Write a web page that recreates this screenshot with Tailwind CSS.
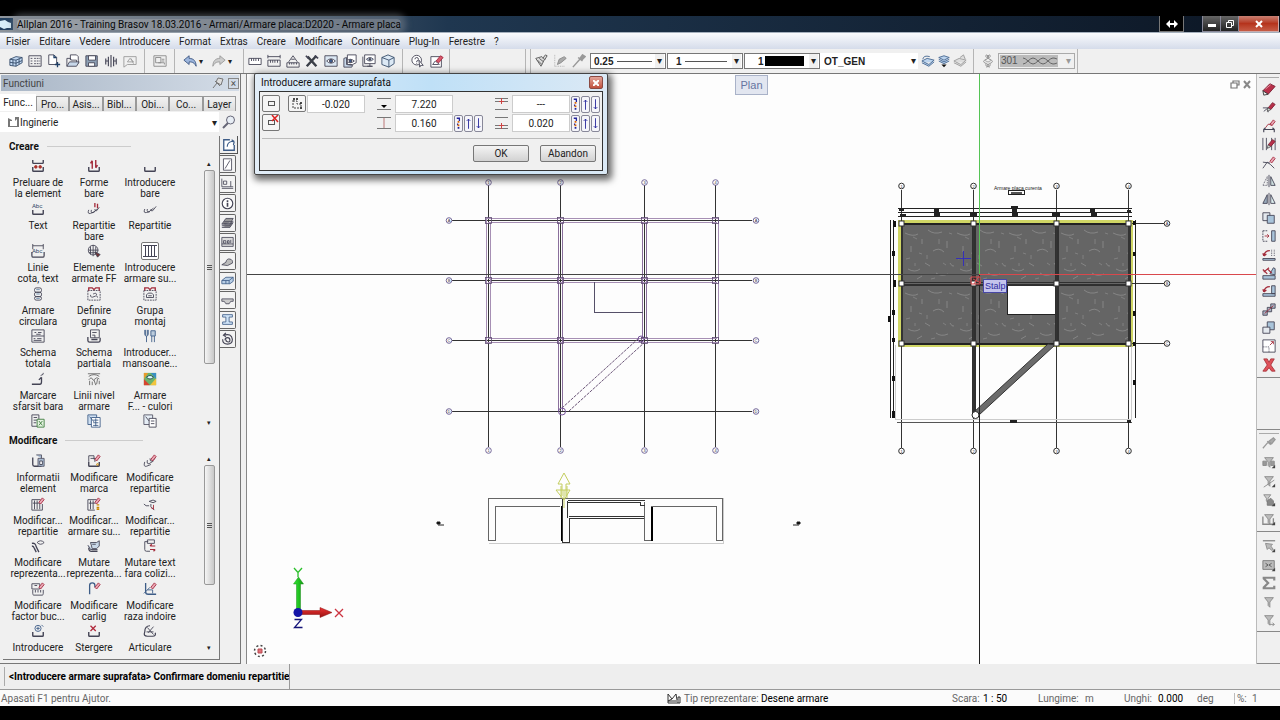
<!DOCTYPE html>
<html lang="ro">

<head>
    <meta charset="UTF-8">
    <meta name="viewport" content="width=device-width, initial-scale=1.0">
    <title>Allplan 2016 - Armare placa</title>
    <script src="https://cdn.jsdelivr.net/npm/@tailwindcss/browser@4"></script>
</head>

<body class="flex h-screen flex-col overflow-hidden bg-black pt-4 pb-[14px] font-[Roboto,'Noto_Sans',sans-serif] text-[10px] leading-[11px] text-[#222]">

    <!-- icon library, 16x16 -->
    <svg class="hidden" xmlns="http://www.w3.org/2000/svg">
        <defs>
            <g id="pen"><path d="M7 9l5-6 3 2-5 6z" fill="#b8304a" stroke="#7b2034" /><path d="M7 9l3 2-4 2z" fill="#eee" stroke="#555" /></g>
            <g id="penSmall"><path d="M9 6l4-5 2 2-4 5z" fill="#e9a8b4" stroke="#a5283f" /></g>
            <g id="tray"><path d="M2 9v4q0 1 1 1h10q1 0 1-1V9" stroke-width="1.6" /></g>
            <g id="funnel"><path d="M3 3h10L9 8v6l-2-2V8z" fill="#bbb" stroke="#888" /></g>
            <g id="corner"><path d="M15 11v4h-4z" fill="#444" stroke="none" /></g>
        </defs>
        <g>
            <symbol id="i-building" viewBox="0 0 16 16"><path d="M1 6l7-3 7 1v6l-7 4-7-1z" fill="#c3d9f2" stroke="#334a68" /><path d="M1 6l7 1 7-3M8 7v7M4.500 6.500v7M1 9.500l7 1 7-3M11.500 5.500v6" stroke="#334a68" /></symbol>
            <symbol id="i-layers" viewBox="0 0 16 16"><path d="M1 2h14v12H1z" /><path d="M3 5h2M7 5h7M3 8h2M7 8h7M3 11h2M7 11h7" stroke-dasharray="2 1" /></symbol>
            <symbol id="i-newdoc" viewBox="0 0 16 16"><path d="M2 1h6l3 3v8H2z" fill="#fff" /><path d="M8 1v3h3M12 9v6M9 12h6" stroke="#1f3f66" stroke-width="1.500" /></symbol>
            <symbol id="i-open" viewBox="0 0 16 16"><path d="M5 7V1h7l2 2v8" fill="#fff" /><path d="M1 14V5h4l1 2h6v2" /><path d="M1 14l3-5h11l-3 5z" fill="#c8d8ea" /></symbol>
            <symbol id="i-save" viewBox="0 0 16 16"><path d="M1 2h13v12H1z" fill="#8da0b5" /><path d="M4 2h8v5H4z" fill="#fff" /><path d="M4 10h7v4H4z" fill="#fff" /></symbol>
            <symbol id="i-split" viewBox="0 0 16 16"><path d="M2 5v7M5 3v11M8 1v14M11 3v11M14 5v7M2 8h3M11 8h3" stroke-width="1.300" /></symbol>
            <symbol id="i-stamp" viewBox="0 0 16 16"><path d="M1 3h14v9H5l-4 3z M5 9l3-4 4 4z" stroke="#999" /><path d="M9 5l3 6" stroke="#999" /></symbol>
            <symbol id="i-layout" viewBox="0 0 16 16"><path d="M1 2h14v12H1zM3 4h6v6H3zM6 10h7v2" stroke="#888" /><path d="M10 6h3M10 8h3" stroke="#888" /></symbol>
            <symbol id="i-undo" viewBox="0 0 16 16"><path d="M1 7l6-5v3c5 0 8 3 8 9-2-4-4-5-8-5v3z" fill="#9db6dd" stroke="#3a5580" /></symbol>
            <symbol id="i-redo" viewBox="0 0 16 16"><path d="M15 7L9 2v3c-5 0-8 3-8 9 2-4 4-5 8-5v3z" fill="#ccc" stroke="#999" /></symbol>
            <symbol id="i-ruler" viewBox="0 0 16 16"><path d="M1 5h14v7H1z" fill="#fff" /><path d="M4 5v3M6.500 5v3M9 5v3M12 5v3" /></symbol>
            <symbol id="i-ruler2" viewBox="0 0 16 16"><path d="M1 1v4M15 1v4M1 3h14M1 7h14v7H1z" /><path d="M4 7v3M6.500 7v3M9 7v3M12 7v3" /></symbol>
            <symbol id="i-angle" viewBox="0 0 16 16"><path d="M1 10h14v5H1zM3 9l5-7 5 7M6 6h4M4 10v2M6.500 10v2M9 10v2M12 10v2" /></symbol>
            <symbol id="i-tools" viewBox="0 0 16 16"><path d="M3 3l10 11M13 2L2 14" stroke-width="2.800" stroke="#3b3f48" /><path d="M1 2l3 3M11 2l4 3" stroke-width="2" /></symbol>
            <symbol id="i-eye" viewBox="0 0 16 16"><path d="M1 2h14v12H1z" fill="#dbe7f3" /><path d="M3 8q5-5 10 0-5 5-10 0z" fill="#fff" /><circle cx="8" cy="8" r="1.800" fill="#3b5f95" /></symbol>
            <symbol id="i-eyedoc" viewBox="0 0 16 16"><path d="M5 1h10v9l-4 2H5z" fill="#fff" /><path d="M1 5l3-1v8l7 1-1 2H1z" fill="#c8d8ea" /><path d="M4 8q4-4 9 0-5 4-9 0z" fill="#fff" /><circle cx="8.500" cy="8" r="1.500" fill="#3b5f95" /></symbol>
            <symbol id="i-eyescreen" viewBox="0 0 16 16"><path d="M3 1h12v10H3z" fill="#fff" /><path d="M1 3v11h11M6 14h6M9 11v3" /><path d="M5 6q4-4 8 0-4 4-8 0z" fill="#c8d8ea" /><circle cx="9" cy="6" r="1" fill="#333" /></symbol>
            <symbol id="i-cube" viewBox="0 0 16 16"><path d="M1 4l7-3 7 3v7l-6 4-8-3z" fill="#dce9f5" stroke="#334a68" /><path d="M1 4l8 3 6-3M9 7v8" stroke="#334a68" /></symbol>
            <symbol id="i-help" viewBox="0 0 16 16"><circle cx="6.500" cy="7" r="5.500" fill="#fff" /><path d="M4.500 6q0-2 2-2t2 2-2 2v1M6.500 10v1" /><path d="M9 7l5 6h-3l-1 2z" fill="#fff" /></symbol>
            <symbol id="i-editbox" viewBox="0 0 16 16"><path d="M1 3h12v12H1z" fill="#fff" /><path d="M3 12l3-4 5 4M3 12h7" /><path d="M7 8l5-6 3 2-5 6z" fill="#d8596c" stroke="#a5283f" /></symbol>
            <symbol id="i-brush" viewBox="0 0 16 16"><path d="M2 5l7-2 3 3-4 8zM4 7l5 5M6 5l5 4M10 5l3-4 2 1-3 5" fill="#ddd" stroke="#555" /></symbol>
            <symbol id="i-pickline" viewBox="0 0 16 16"><path d="M2 1v13M2 14h11" stroke="#aaa" stroke-dasharray="1 1" /><path d="M5 12l2-6 6-3 2 2-6 5z" fill="#aaa" stroke="#888" /></symbol>
            <symbol id="i-dropper" viewBox="0 0 16 16"><path d="M1 15l8-9M7 4l5 4M9 5l3-4 3 2-4 4z" fill="#999" stroke="#999" stroke-width="1.700" /></symbol>
            <symbol id="i-layerblue" viewBox="0 0 16 16"><path d="M1 8l6-3 8 2-6 5zM1 10l8 4 6-5" fill="#bcd4ee" stroke="#42648e" /><path d="M2 6q1-5 8-3" stroke="#42648e" /></symbol>
            <symbol id="i-layerdown" viewBox="0 0 16 16"><path d="M2 4l6-2 6 2-6 3zM2 6l6 3 6-3M2 8l6 3 6-3" fill="#bcd4ee" stroke="#42648e" /><path d="M5 12h6l-3 3z" fill="#111" stroke="none" /></symbol>
            <symbol id="i-layergray" viewBox="0 0 16 16"><path d="M1 8l6-3 8 2-6 5zM1 10l8 4 6-5M8 4l4-3 2 5" fill="#ddd" stroke="#999" /></symbol>
            <symbol id="i-chain" viewBox="0 0 16 16"><path d="M6 1q6 2.500 0 5t0 5 0 4M10 1q-6 2.500 0 5t0 5 0 4" stroke="#888" /><path d="M6 1q-2 3 2 3t2-3M6 6q-2 3 2 3t2-3M6 11q-2 3 2 3t2-3" stroke="#999" /></symbol>

            <symbol id="i-preluare" viewBox="0 0 16 16"><path d="M2 1v3q0 1 1 1h10q1 0 1-1V1" stroke-width="1.600" /><use href="#tray" /><circle cx="5.500" cy="9" r="1.500" fill="#a32" stroke="#a33" /><circle cx="10.500" cy="9" r="1.500" fill="#a32" stroke="#a33" /></symbol>
            <symbol id="i-forme" viewBox="0 0 16 16"><use href="#tray" /><path d="M6 11V2M6 2L4 5M10 1v9M10 10l2-3" stroke="#a32b3a" stroke-width="1.600" /></symbol>
            <symbol id="i-bare" viewBox="0 0 16 16"><use href="#tray" /></symbol>
            <symbol id="i-text" viewBox="0 0 16 16"><use href="#tray" /><text x="1" y="7" font-size="7" fill="#334a68" stroke="none" font-family="Roboto">Abc</text></symbol>
            <symbol id="i-repart1" viewBox="0 0 16 16"><path d="M2 9q-2 5 2 4l5-2M5 9q-1 4 2 3l5-4M9 8q0 3 2 2l3-4" /><path d="M9 1v5M12 2v5" stroke="#a32b3a" stroke-width="1.500" /></symbol>
            <symbol id="i-repart2" viewBox="0 0 16 16"><path d="M2 8q-2 5 2 4l4-1M5 8q-1 4 2 3l5-4M9 8q0 3 2 2l4-5" /></symbol>
            <symbol id="i-cota" viewBox="0 0 16 16"><path d="M2 0v6M14 0v6M2 2h12" /><text x="1" y="10" font-size="7" fill="#334a68" stroke="none" font-family="Roboto">Abc</text><path d="M1 9v4q0 2 1 2h12q1 0 1-2V9" stroke-width="1.400" /></symbol>
            <symbol id="i-armff" viewBox="0 0 16 16"><circle cx="7" cy="7" r="5.500" /><path d="M2 7h11M7 1v13M4 3v9M10 3v9M2 10h9" /><path d="M9 9l6 3-3 3z" fill="#733" /></symbol>
            <symbol id="i-suprafata" viewBox="0 0 16 16"><path d="M1 2.500h14M3.500 3v10M6.500 3v10M9.500 3v10M12.500 3v10M1 13.500h14" /></symbol>
            <symbol id="i-circ" viewBox="0 0 16 16"><rect x="4" y="1" width="8" height="5" rx="2" /><rect x="4" y="6" width="8" height="5" rx="2" /><rect x="4" y="11" width="8" height="4" rx="2" /><path d="M6 3h4M6 8h4M6 13h4" stroke="#68a" /></symbol>
            <symbol id="i-definire" viewBox="0 0 16 16"><path d="M1 4h14v11H1z" stroke-dasharray="2 1" /><path d="M2 4V1h4l2 2 2-2h4v3" stroke="#a32b3a" stroke-width="1.500" /><path d="M4 9q0 4 4 2t4 1M7 8q4-2 4 1" /></symbol>
            <symbol id="i-montaj" viewBox="0 0 16 16"><path d="M1 4h14v11H1z" stroke-dasharray="2 1" /><path d="M2 4V1h4l2 2 2-2h4v3" stroke="#a32b3a" stroke-width="1.500" /><path d="M4 12V9l2-2h4l2 2v3zM6 10h4" /></symbol>
            <symbol id="i-schemat" viewBox="0 0 16 16"><path d="M1 1h14v14H1zM1 8h14M4 4h2M8 4h4M3 11h2M7 11h5M3 13h9M6 6h5" /></symbol>
            <symbol id="i-schemap" viewBox="0 0 16 16"><path d="M4 1h10v9H4zM6 4h5M6 7h3v3" /><path d="M1 9v4q0 2 2 2h10q2 0 2-2v-3M5 12h7" stroke-width="1.500" /></symbol>
            <symbol id="i-mansoane" viewBox="0 0 16 16"><path d="M2 1v5q0 2 2 2t2-2V1M4 8v7M3 1v6M5 1v6" stroke="#3d5c87" /><path d="M9 2h5v6H9zM10 8v7M13 8v7" stroke="#3d5c87" fill="#bcd" /></symbol>
            <symbol id="i-sfarsit" viewBox="0 0 16 16"><path d="M1 14h9q2 0 2-3V6M12 6l-3 3" stroke-width="1.500" /><path d="M11 4q4-1 3-3" /></symbol>
            <symbol id="i-nivel" viewBox="0 0 16 16"><path d="M1 2h14M2 5q6-4 12 0M2 9q3-4 4-1t3 0 5 0M3 10v5M6 11v4M8 9l2 6M12 8l-1 6M14 10v4" stroke="#666" /></symbol>
            <symbol id="i-culori" viewBox="0 0 16 16"><g stroke="none"><path d="M1 1h14v14H1z" fill="#6cb36c" /><path d="M1 8l7 7H1z" fill="#d6452f" /><path d="M15 15H8l7-8z" fill="#f2c43c" /><path d="M9 1h6v7z" fill="#3a8fc4" /><path d="M1 1h5L1 8z" fill="#e99b2e" /></g><path d="M4 6q4-4 8 0-4 4-8 0z" fill="#dff" stroke="#245" /></symbol>
            <symbol id="i-excel" viewBox="0 0 16 16"><path d="M1 1h8v13H1zM3 4h4M3 7h4M3 10h3" /><path d="M7 6h8v9H7z" fill="#e5f3e2" stroke="#3c7a3c" /><path d="M9 8l4 5M13 8l-4 5" stroke="#3c7a3c" /></symbol>
            <symbol id="i-export" viewBox="0 0 16 16"><path d="M1 1h10v11H1z" fill="#cfe0f2" stroke="#3d5c87" /><path d="M5 4h10v11H5z" fill="#fff" stroke="#3d5c87" /><path d="M7 7h6M7 10h6M7 13h6M10 5v9M3 3l5 6" stroke="#3d5c87" /></symbol>
            <symbol id="i-export2" viewBox="0 0 16 16"><path d="M1 1h10v11H1z" fill="#e6eef6" stroke="#556" /><path d="M7 5h8v10H7z" fill="#fff" /><path d="M9 8h4M9 11h4M3 3l4 5" /></symbol>
            <symbol id="i-info" viewBox="0 0 16 16"><path d="M2 4v8q0 2 2 2h8" stroke-width="1.500" /><path d="M6 1h6v4M8 5h7v9H8z" fill="#a9bcd2" stroke="#556" /><path d="M10 8h3v4h-3z" fill="#fff" /></symbol>
            <symbol id="i-marca" viewBox="0 0 16 16"><use href="#tray" /><path d="M2 9V2h6v4M4 5h5v4" /><circle cx="12" cy="12" r="1" stroke="#c80" /><use href="#penSmall" /></symbol>
            <symbol id="i-modrep" viewBox="0 0 16 16"><path d="M2 9q-2 6 2 5l5-2M5 7q-1 5 2 4l5-3M8 5q0 4 2 3l4-3" /><use href="#penSmall" /></symbol>
            <symbol id="i-modgrid" viewBox="0 0 16 16"><path d="M1 3h10M1 3v12h12V8M4 4v10M7 4v10M10 6v8M2 7h8" /><use href="#penSmall" /></symbol>
            <symbol id="i-modgrid2" viewBox="0 0 16 16"><path d="M1 3h10M1 3v12h8M4 4v10M7 4v10M2 7h8" /><path d="M11 9h3M11 12h3M11 14h3" stroke="#c80" stroke-width="1.500" /><use href="#penSmall" /></symbol>
            <symbol id="i-modview" viewBox="0 0 16 16"><path d="M1 8q2 3 6 2M7 5q5-3 8 0-3 3-8 0zM9 8v3l4 4" /><path d="M12 9v5l-3-2" stroke="#a32b3a" /></symbol>
            <symbol id="i-modreprez" viewBox="0 0 16 16"><path d="M1 5q4-1 5 4l3 6M1 8q2 0 3 3l2 4" stroke-width="1.500" /><path d="M7 4q4-4 8 0-4 4-8 0z" /></symbol>
            <symbol id="i-mutrep" viewBox="0 0 16 16"><path d="M4 4h7l3-2v6l-3 3H6zM1 7l3 5h8M6 6h4" fill="#c9d8e8" /><path d="M2 10q0 5 4 4h6" stroke-width="1.500" /></symbol>
            <symbol id="i-muttext" viewBox="0 0 16 16"><path d="M2 3v9q0 2 2 2h4M2 3h4M5 1h8v4H5z" /><path d="M8 8h6M8 8l2-2M14 12H8M14 12l-2 2" stroke="#a32b3a" stroke-width="1.400" /></symbol>
            <symbol id="i-factor" viewBox="0 0 16 16"><path d="M1 2h9v6H1z" /><path d="M2 9v4q0 2 1 2h10q1 0 1-2V9M5 9v3M8 9v3M11 9v3M4 4h3" /><use href="#penSmall" /></symbol>
            <symbol id="i-carlig" viewBox="0 0 16 16"><path d="M3 14V4q0-3 3-3t3 3v2" stroke="#3d5c87" stroke-width="1.500" /><use href="#penSmall" /></symbol>
            <symbol id="i-raza" viewBox="0 0 16 16"><path d="M3 1v10q0 3 3 3h9" stroke="#3d5c87" stroke-width="1.500" /><path d="M1 13l7-7M5 9h6v4" stroke="#3d5c87" /><use href="#penSmall" /></symbol>
            <symbol id="i-intro" viewBox="0 0 16 16"><use href="#tray" /><circle cx="8" cy="5" r="3.500" stroke="#3d5c87" /><path d="M8 3v4M6 5h4M12 1l2 2" stroke="#3d5c87" /></symbol>
            <symbol id="i-sterge" viewBox="0 0 16 16"><use href="#tray" /><path d="M4 2l6 6M10 2L4 8" stroke="#b02a3c" stroke-width="1.500" /></symbol>
            <symbol id="i-articul" viewBox="0 0 16 16"><path d="M2 9q0-7 6-7M2 9q-2 5 3 5h6q4 0 3-4" stroke-width="1.400" /><path d="M5 4l7 8M12 3l-6 7M4 9h8" /></symbol>

            <symbol id="s-pen" viewBox="0 0 16 16"><path d="M9 2H2v12h12V8" fill="#fff" stroke="#3d5c87" stroke-width="1.500" /><path d="M6 10q0-5 5-6h3M14 4l-3-2M14 4l-1 4" stroke="#3d5c87" stroke-width="1.300" /></symbol>
            <symbol id="s-line" viewBox="0 0 16 16"><path d="M3 1h10v14H3z" fill="#fff" /><path d="M5 13l6-10" /></symbol>
            <symbol id="s-wall" viewBox="0 0 16 16"><path d="M1 2v10h14M3 5h4v4H3zM12 5v7M1 14h14" /></symbol>
            <symbol id="s-info" viewBox="0 0 16 16"><circle cx="8" cy="8" r="6.500" fill="#fff" stroke-width="1.400" /><path d="M8 4v2M8 7v5" stroke-width="2" /></symbol>
            <symbol id="s-stack" viewBox="0 0 16 16"><path d="M1 10l5-7h9l-4 7zM1 12h10l4-6M1 14h10l4-6" fill="#999" /><path d="M4 7h9M3 9h9" /></symbol>
            <symbol id="s-photo" viewBox="0 0 16 16"><path d="M1 3h14v11H1zM1 11h14M3 7h3v3H3zM8 7h2v3H8zM12 6v4" fill="#ddd" /></symbol>
            <symbol id="s-hat" viewBox="0 0 16 16"><path d="M1 12l5-3q1-5 5-4t3 5l-6 3z" fill="#bbb" /></symbol>
            <symbol id="s-blocks" viewBox="0 0 16 16"><path d="M1 8l5-4h9v5l-4 3H1zM1 8h9v4M6 8v4M10 8l5-4" fill="#b9cfe6" stroke="#3d5c87" /></symbol>
            <symbol id="s-chan" viewBox="0 0 16 16"><path d="M1 6h14v3h-3l-2 3H6L4 9H1z" fill="#ccc" /></symbol>
            <symbol id="s-beam" viewBox="0 0 16 16"><path d="M2 2h12v3h-4v6h4v3H2v-3h4V5H2z" fill="#cfe3f7" stroke="#3d5c87" /></symbol>
            <symbol id="s-spiral" viewBox="0 0 16 16"><path d="M6 1l-3 3 3 2M3 4q10-3 11 5 0 6-6 6t-6-6M5 10q0-3 3-3t3 3-3 2-1-2" stroke-width="1.400" /></symbol>

            <symbol id="r-erase" viewBox="0 0 16 16"><path d="M1 10l8-8 6 3-8 9z" fill="#b8304a" stroke="#7b2034" /><path d="M1 10l6 4-5 1z" fill="#eee" stroke="#333" /><path d="M4 8l6-5" stroke="#e898a8" /></symbol>
            <symbol id="r-cut" viewBox="0 0 16 16"><path d="M1 9h6v5M7 9l-5 4" /><use href="#pen" /></symbol>
            <symbol id="r-seg" viewBox="0 0 16 16"><path d="M2 15v-3h12v3M2 12l2-2M14 12l-2-2" stroke-width="1.300" /><use href="#penSmall" /><path d="M4 10l3-4h4" stroke="#a32b3a" /></symbol>
            <symbol id="r-trim" viewBox="0 0 16 16"><path d="M1 1v14M5 1v14M11 1v14M15 1v14" /><use href="#pen" /></symbol>
            <symbol id="r-poly" viewBox="0 0 16 16"><path d="M1 14l5-7 4 3 4 4M1 7l8 1" /><use href="#penSmall" /></symbol>
            <symbol id="r-mirror1" viewBox="0 0 16 16"><path d="M8 1v14" /><path d="M6 3v10H1z" stroke-dasharray="1 1" /><path d="M10 3v10h5z" fill="#cdd" /></symbol>
            <symbol id="r-mirror2" viewBox="0 0 16 16"><path d="M8 1v14" /><path d="M6 3v10H1z" fill="#9ab" /><path d="M10 3v10h5z" fill="#dee" /></symbol>
            <symbol id="r-copy" viewBox="0 0 16 16"><path d="M1 2h8v9H1z" fill="#e4e9ee" /><path d="M6 5h8v9H6z" fill="#a9c4da" /></symbol>
            <symbol id="r-move" viewBox="0 0 16 16"><path d="M1 2h5M1 2v12h5" stroke-dasharray="2 1" /><path d="M3 8h5M8 8L6 6M8 8l-2 2" stroke="#a32b3a" /><path d="M11 2h4v12h-4z" fill="#a9c4da" /></symbol>
            <symbol id="r-rot" viewBox="0 0 16 16"><path d="M1 12h14v2H1z" fill="#a9c4da" /><path d="M2 9q1-6 7-6M2 9L1 6M2 9l3-2" stroke="#a32b3a" stroke-width="1.400" /><path d="M11 2v8M14 2v8" stroke-dasharray="1 1" /></symbol>
            <symbol id="r-rot2" viewBox="0 0 16 16"><path d="M1 11h14v4H1zM9 9l4-7 2 1v7z" fill="#a9c4da" /><path d="M1 4l5 5M6 3l5 5M2 7l6-5" stroke="#a32b3a" stroke-width="1.400" /></symbol>
            <symbol id="r-rot3" viewBox="0 0 16 16"><path d="M1 11h14v3H1zM11 2h4v9h-4z" fill="#a9c4da" /><path d="M2 9q1-6 7-6M2 9L1 6M2 9l3-2" stroke="#a32b3a" stroke-width="1.400" /></symbol>
            <symbol id="r-multi" viewBox="0 0 16 16"><path d="M1 9h5v5H1zM6 5h5v5H6zM10 1h5v5h-5z" fill="#a9b4c4" /><path d="M3 12l10-9" stroke="#a32b3a" /></symbol>
            <symbol id="r-order" viewBox="0 0 16 16"><path d="M6 1h8v9H6z" fill="#a9c4da" /><path d="M1 7h8v7H1z" fill="#e4e9ee" /></symbol>
            <symbol id="r-scale" viewBox="0 0 16 16"><path d="M1 1h14v14H1z" fill="#fff" /><path d="M1 9h7v6" stroke-dasharray="1 1" /><path d="M9 7l4-4M13 3h-3M13 3v3" stroke="#a32b3a" /></symbol>
            <symbol id="r-del" viewBox="0 0 16 16"><path d="M2 1h4l2 4 2-4h4l-4 7 5 7h-4l-3-4-3 4H1l5-7z" fill="#e0525a" stroke="#a8323a" /></symbol>
            <symbol id="f-pick" viewBox="0 0 16 16"><path d="M1 14l6-7M6 6l4 4M8 6l5-4 2 2-4 5z" fill="#aaa" stroke="#999" stroke-width="1.400" /></symbol>
            <symbol id="f-block" viewBox="0 0 16 16"><path d="M1 7h4v5H1zM10 7h4v5h-4z" fill="#999" stroke="#888" /><use href="#funnel" /><use href="#corner" /></symbol>
            <symbol id="f-line" viewBox="0 0 16 16"><use href="#funnel" /><path d="M2 15l12-8" stroke="#888" /><use href="#corner" /></symbol>
            <symbol id="f-house" viewBox="0 0 16 16"><path d="M2 2h8L7 6v5L5 9V6z" fill="#ccc" stroke="#888" /><path d="M6 14V9l4-3 3 3v5z" fill="#888" stroke="#777" /><use href="#corner" /></symbol>
            <symbol id="f-tray" viewBox="0 0 16 16"><use href="#funnel" /><path d="M1 5v9h12V7" stroke="#888" stroke-width="1.500" /><use href="#corner" /></symbol>
            <symbol id="f-arrow" viewBox="0 0 16 16"><path d="M1 2h14" stroke="#888" stroke-width="1.500" /><path d="M4 5l8 1-2 2 3 4-2 1-3-3-2 2z" fill="#bbb" stroke="#888" /><use href="#corner" /></symbol>
            <symbol id="f-box" viewBox="0 0 16 16"><path d="M1 3h13v10H1z" fill="#bbb" stroke="#777" /><path d="M4 6l3 2-3 2M11 6L8 8l3 2" stroke="#555" /><use href="#corner" /></symbol>
            <symbol id="f-sum" viewBox="0 0 16 16"><path d="M14 5V2H2v1l5 5-5 5v1h12v-3" stroke="#888" stroke-width="2.500" /></symbol>
            <symbol id="f-funnel" viewBox="0 0 16 16"><use href="#funnel" /></symbol>
            <symbol id="f-funnel2" viewBox="0 0 16 16"><use href="#funnel" /><path d="M9 13h5M12 11l2 2-2 2" stroke="#888" /></symbol>
        </g>
    </svg>

    <header class="flex h-[17px] shrink-0 items-center border-b border-[#a5b0bd] bg-linear-to-r from-[#8f959c] via-[#1f3750] via-35% to-[#0c1624]">
        <svg class="mr-1 h-3 w-[13px] shrink-0" viewBox="0 0 13 12"><rect width="13" height="12" fill="#23405f" /><path d="M0 3l5-1 3 2 3 1v5H7l-3 1-4-2z" fill="#d8eef8" /></svg>
        <h1 class="rounded bg-linear-to-r from-[#a0a5ab] via-[#808892] to-[#6c7785] whitespace-nowrap text-[#080808] shadow-[0_0_6px_5px_#7d858f80]">Allplan 2016 - Training Brasov 18.03.2016 - Armari/Armare placa:D2020 - Armare placa</h1>
        <div class="ml-auto flex h-4 text-white">
            <button aria-label="Partajare" class="mr-[18px] flex w-[25px] items-center justify-center border border-t-0 border-[#777] bg-black"><svg class="h-2 w-3" viewBox="0 0 12 8"><path d="M0 4l4-4v3h4V0l4 4-4 4V5H4v3z" fill="#fff" /></svg></button>
            <button aria-label="Minimizare" class="flex w-[19px] items-end justify-center border border-t-0 border-[#889] bg-linear-to-b from-[#666] to-[#222] pb-1"><span class="h-[3px] w-2 bg-white"></span></button>
            <button aria-label="Restaurare" class="flex w-[18px] items-center justify-center border-r border-b border-[#889] bg-linear-to-b from-[#666] to-[#222]"><svg class="size-2" viewBox="0 0 8 8"><path d="M2.500 2V.500h5v5H6M.500 2.500h5v5h-5z" fill="none" stroke="#fff" /></svg></button>
            <button aria-label="Inchidere" class="mr-px flex w-[40px] items-center justify-center border-r border-b border-[#caa] bg-linear-to-b from-[#c77f72] via-[#b5331c] to-[#c65b45]"><svg class="size-2" viewBox="0 0 8 8"><path d="M1 1l6 6M7 1L1 7" stroke="#fff" stroke-width="2" /></svg></button>
        </div>
    </header>

    <nav id="menu" class="flex h-4 shrink-0 items-center gap-[9px] bg-linear-to-b from-[#fafbfd] to-[#d5dcea] pl-[6px]"></nav>

    <div class="flex h-[25px] shrink-0 items-center border-b border-[#777] bg-[#f0f0f0] pl-[6px]">
        <div class="flex" data-icons="building layers newdoc open save split stamp"></div>
        <i class="mx-[5px] h-full w-px bg-[#b5b5b5]"></i>
        <div class="flex" data-icons="layout"></div>
        <i class="mx-[5px] h-full w-px bg-[#b5b5b5]"></i>
        <div class="flex" data-icons="undo"></div>
        <span class="w-[10px] text-[8px]">▾</span>
        <div class="flex" data-icons="redo"></div>
        <span class="w-[10px] text-[8px]">▾</span>
        <i class="mr-px ml-[5px] h-full w-px bg-[#b5b5b5]"></i>
        <div class="flex" data-icons="ruler ruler2 angle tools eye eyedoc eyescreen cube"></div>
        <i class="mx-[5px] h-full w-px bg-[#b5b5b5]"></i>
        <div class="flex" data-icons="help editbox"></div>
        <i class="ml-[3px] h-full w-px bg-[#b5b5b5]"></i>
        <i class="ml-[75px] h-full w-px bg-[#b5b5b5]"></i>
        <i class="ml-1 h-full w-px bg-[#b5b5b5]"></i>
        <div class="flex" data-icons="brush pickline dropper"></div>
        <label class="relative ml-[2px] h-4 w-[76px] border border-[#777] bg-white">
            <select aria-label="Grosime linie" class="h-full w-full appearance-none pl-[3px] align-top font-['Liberation_Sans',sans-serif] font-bold"><option>0.25</option></select>
            <i class="pointer-events-none absolute top-[7px] left-[26px] h-px w-[35px] bg-[#555]"></i><span class="pointer-events-none absolute top-0 right-px bg-[#f0f0f0] px-[2px] leading-[14px]">▾</span>
        </label>
        <label class="relative ml-px h-4 w-[76px] border border-[#777] bg-white">
            <select aria-label="Tip linie" class="h-full w-full appearance-none pl-2 align-top font-['Liberation_Sans',sans-serif] font-bold"><option>1</option></select>
            <i class="pointer-events-none absolute top-[7px] left-[17px] h-px w-[42px] bg-[#555]"></i><span class="pointer-events-none absolute top-0 right-px bg-[#f0f0f0] px-[2px] leading-[14px]">▾</span>
        </label>
        <label class="relative ml-px h-4 w-[76px] border border-[#777] bg-white">
            <select aria-label="Culoare linie" class="h-full w-full appearance-none pl-[13px] align-top font-['Liberation_Sans',sans-serif] font-bold"><option>1</option></select>
            <i class="pointer-events-none absolute top-[2px] left-[20px] h-[10px] w-[39px] bg-black"></i><span class="pointer-events-none absolute top-0 right-px bg-[#f0f0f0] px-[2px] leading-[14px]">▾</span>
        </label>
        <label class="relative h-4 w-[98px] bg-white">
            <select aria-label="Layer" class="h-full w-full appearance-none pl-1 align-top font-['Liberation_Sans',sans-serif] font-bold"><option>OT_GEN</option></select>
            <span class="pointer-events-none absolute top-0 right-[2px] leading-4">▾</span>
        </label>
        <div class="flex -space-x-[3px]" data-icons="layerblue layerdown layergray"></div>
        <i class="mx-1 h-full w-px bg-[#b5b5b5]"></i>
        <div class="flex" data-icons="chain"></div>
        <label class="relative ml-px h-4 w-[77px] border border-[#aaa] bg-[#f0f0f0]">
            <select disabled aria-label="Hasura" class="mt-px ml-px h-[12px] w-[58px] appearance-none bg-[#bbb] pl-px align-top font-['Liberation_Sans',sans-serif] leading-3 text-[#555] opacity-100"><option>301</option></select>
            <svg class="pointer-events-none absolute top-[3px] left-[24px] h-2 w-[34px]" viewBox="0 0 34 8" fill="none" stroke="#666"><path d="M0 1q2 0 5 3t5 3 5-3 5-3 5 3 5 3 4-1M0 7q2 0 5-3t5-3 5 3 5 3 5-3 5-3 4 1" /></svg>
            <span class="pointer-events-none absolute top-0 right-[3px] leading-[14px] text-[#999]">▾</span>
        </label>
        <i class="ml-[2px] h-full w-px bg-[#b5b5b5]"></i>
    </div>

    <div class="flex min-h-0 flex-1 bg-[#f0f0f0]">

        <aside class="flex w-[241px] shrink-0 flex-col border-r border-b border-[#777]">
            <div class="m-px flex h-4 shrink-0 items-center bg-linear-to-r from-[#a9b6c6] to-[#d3dce7] pl-[2px] text-[#444]">
                Functiuni
                <svg class="mr-1 ml-auto size-3" viewBox="0 0 12 12"><path d="M1 11l4-5M3 4l5 5M4 5l2-4 5 1-2 6z" fill="#ddd" stroke="#777" /></svg>
                <button aria-label="Inchide panoul" class="flex size-[11px] items-center justify-center border border-[#888] text-[#555]">×</button>
            </div>
            <div id="tabs" class="mt-[2px] flex h-[17px] shrink-0 items-end pr-1"></div>
            <div class="mt-px mr-1 flex h-[20px] shrink-0 items-center">
                <label class="relative flex h-full flex-1 items-center bg-white pl-[7px]">
                    <svg class="mr-px size-3" viewBox="0 0 12 12"><path d="M1 2l4 2v1H3v5h7V3L8 5V1h4v10H1z" fill="#777" /></svg>
                    <select aria-label="Modul" class="flex-1 appearance-none"><option>Inginerie</option></select>
                    <span class="pointer-events-none absolute right-[2px]">▾</span>
                </label>
                <button aria-label="Cautare" class="ml-[3px]"><svg class="size-[14px]" viewBox="0 0 14 14"><circle cx="8.500" cy="5" r="4" fill="#e8eef5" stroke="#667" /><path d="M6 8l-5 5" stroke="#667" stroke-width="2" /></svg></button>
            </div>
            <div class="flex min-h-0 flex-1 pt-1">
                <div class="mb-[3px] ml-[3px] flex w-[217px] shrink-0 flex-col border-r border-b border-[#777]">
                    <h2 class="mt-[3px] flex h-[15px] items-center gap-2 pl-[6px] font-bold text-[#111]">Creare <i class="h-px w-[84px] bg-[#ccc]"></i></h2>
                    <div class="mt-[5px] flex h-[269px] shrink-0">
                        <ul id="creare" class="ml-[7px] grid w-[168px] grid-cols-[repeat(3,56px)] content-between text-center"></ul>
                        <div class="ml-auto mr-1 flex w-[12px] flex-col items-center text-[7px] leading-[10px]">▴<i class="mt-px flex h-[194px] w-[11px] flex-col items-center justify-center gap-px rounded-xs border border-[#999] bg-linear-to-r from-[#f5f5f5] to-[#c8c8c8]"><b class="h-px w-[5px] bg-[#555]"></b><b class="h-px w-[5px] bg-[#555]"></b><b class="h-px w-[5px] bg-[#555]"></b></i><span class="mt-auto">▾</span></div>
                    </div>
                    <h2 class="mt-[5px] flex h-[15px] items-center gap-2 pl-[6px] font-bold text-[#111]">Modificare <i class="h-px w-[78px] bg-[#ccc]"></i></h2>
                    <div class="mt-[6px] flex h-[199px] shrink-0">
                        <ul id="modificare" class="ml-[7px] grid w-[168px] grid-cols-[repeat(3,56px)] content-between text-center"></ul>
                        <div class="ml-auto mr-1 flex w-[12px] flex-col items-center text-[7px] leading-[10px]">▴<i class="mt-px flex h-[120px] w-[11px] flex-col items-center justify-center gap-px rounded-xs border border-[#999] bg-linear-to-r from-[#f5f5f5] to-[#c8c8c8]"><b class="h-px w-[5px] bg-[#555]"></b><b class="h-px w-[5px] bg-[#555]"></b><b class="h-px w-[5px] bg-[#555]"></b></i><span class="mt-auto">▾</span></div>
                    </div>
                </div>
                <div id="side" class="flex h-[212px] flex-col justify-between"></div>
            </div>
        </aside>

        <main class="relative ml-[5px] flex-1 overflow-hidden border-l border-[#888] bg-[#fdfdfd]">
            <svg class="absolute inset-0 size-full" font-family="Liberation Sans, sans-serif">
                <defs>
                    <pattern id="concrete" width="52" height="60" patternUnits="userSpaceOnUse" x="903" y="225">
                        <rect width="52" height="60" fill="#656565" />
                        <path d="M2 8q8 4 13 1M25 5q6 5 14 2M8 21v6M30 26q6-4 11 1M5 44q7 4 12 0M33 48q5 4 12 1M22 38l5 3M44 16v7M19 14v5M47 38q2 4 4 3M14 54l5-3" fill="none" stroke="#9a9a9a" opacity=".6" />
                        <path d="M10 12l4 2M36 14v5M3 34l4-1M24 30v4M40 38l3 2M28 54l4-1M46 8l3 1M12 38v3M16 28l3 1" fill="none" stroke="#808080" />
                    </pattern>
                    <linearGradient id="gx" x2="0" y2="1"><stop stop-color="#e33" /><stop offset="1" stop-color="#911" /></linearGradient>
                    <linearGradient id="gy"><stop stop-color="#3e3" /><stop offset="1" stop-color="#191" /></linearGradient>
                </defs>
                <g transform="translate(-247 -74)" fill="none">
                    <!-- formwork plan -->
                    <g shape-rendering="crispEdges">
                        <path d="M488.500 185V447M560.500 185V447M644.500 185V447M715.500 185V447M452 220.500H752M452 280.500H752M452 340.500H752M452 411.500H752" stroke="#333" />
                        <path d="M486.500 218.500H718.500V342.500H486.500zM490.500 222V339M488 222.500H717M488 278.500H717M488 282.500H717M488 338.500H717" stroke="#a68fb4" />
                        <path d="M558.500 222V411M562.500 222V411M642.500 222V339M646.500 222V339" stroke="#8a6f9c" />
                        <path d="M594.500 282V312.500H643" stroke="#555068" />
                    </g>
                    <path d="M562 408L639 338M569 411L645 342" stroke="#6b5578" stroke-dasharray="3 1" />
                    <circle cx="562" cy="411.500" r="3.500" stroke="#75539a" />
                    <circle cx="641" cy="339" r="3" stroke="#75539a" />
                    <g id="nodesLeft" stroke="#5d4a70" stroke-width=".800"></g>
                    <g id="bubblesLeft" stroke="#75699a"></g>

                    <!-- section -->
                    <g shape-rendering="crispEdges">
                        <path d="M488.500 543.500H723.500V498" stroke="#ccc" />
                        <path d="M488.500 540.500V498.500H722.500V540.500H716.500V506.500H651.500V540.500H644.500V501.500M488.500 540.500H495.500V506.500H560" stroke="#666" />
                        <path d="M561.500 506V541M651.500 507V541" stroke="#000" stroke-width="2" />
                        <path d="M562.500 499V542.500H569.500V518.500H644M568 500.500H645M568 502.500H640V505.500H645M568.500 516.500H644M567.500 501V518" stroke="#333" />
                    </g>
                    <path d="M564 473l6 11h-4v12M564 473l-6 11h4v12M556 490h14l-6 10zM564 490v18M561 486v12M567 486v12" stroke="#c3cd5e" />
                    <path d="M437 522h3v2h-3zM438 525h6M797 522h3v2h-3zM793 525h6" fill="#000" stroke="#222" />

                    <!-- reinforcement plan -->
                    <g shape-rendering="crispEdges">
                        <path d="M901 223H1129V343H901z" fill="url(#concrete)" />
                        <path d="M1007 284H1055V314H1007z" fill="#fff" stroke="#222" />
                        <path d="M899.500 221.500H1131.500V345.500H899.500z" stroke="#d0d665" stroke-width="3" />
                        <path d="M901 223.500H1129M901 343.500H1129" stroke="#222" stroke-width="2" />
                        <path d="M901 283.500H1129M973.500 223V415M1056.500 223V343" stroke="#303030" stroke-width="4" />
                        <path d="M1129.500 223V343M901.500 223V343" stroke="#333" stroke-width="2" />
                        <path d="M973.500 225V413M1056.500 225V341M903 283.500H1127" stroke="#666" />
                        <path d="M901.500 190V448M973.500 190V448M1056.500 190V448M1128.500 190V448M1132 223.500H1164M1132 283.500H1164M1132 343.500H1164" stroke="#333" />
                        <path d="M898 208.500H1132M898 212.500H1132M898 216.500H1132M890.500 220V418M893.500 220V418M1135.500 220V418" stroke="#222" />
                        <path d="M895.500 345V419.500H1131.500V345" stroke="#ccc" />
                        <path d="M897 422.500H1132" stroke="#555" />
                        <path d="M1011 207.500h7M934 210.500h5M1012 210.500h5M1090 210.500h5M934 214.500h6M1012 214.500h6M1091 214.500h6M970 214.500h7M1052 214.500h8M899 209.500h5M1127 211.500h4M900 215.500h6M1010 421.500h7M1127 421.500h4" stroke="#222" stroke-width="3" />
                        <path d="M889.500 316v6M893.500 251v5M893.500 310v5M893.500 376v5M894.500 221v6M894.500 280v7M893.500 338v4M893.500 411v7M1134.500 252v4M1134.500 311v5M1134.500 380v5M1134.500 221v4M1134.500 342v4" stroke="#111" stroke-width="3" />
                        <path d="M1008.500 190.500h16v4h-16z" stroke="#222" /><path d="M1011 192.500h11" stroke="#555" stroke-width="2" />
                    </g>
                    <text x="994" y="190" font-size="5" fill="#222">Armare placa curenta</text>
                    <path d="M974 412L1048 344L1055 345L979 415z" fill="#6b6b6b" stroke="#333" />
                    <circle cx="975.500" cy="415" r="3.500" fill="#fff" stroke="#222" />
                    <g id="nodesRight" fill="#fff" stroke="#333"></g>
                    <g id="bubblesRight" fill="#fff" stroke="#333"></g>

                    <!-- crosshair -->
                    <g shape-rendering="crispEdges">
                        <path d="M247 274.500H979" stroke="#444" />
                        <path d="M979 274.500H1280" stroke="#d9484c" />
                        <path d="M979.500 74V274" stroke="#55c455" />
                        <path d="M979.500 275V680" stroke="#222" />
                        <path d="M956 258.500H971M963.500 251V266" stroke="#3530b8" />
                    </g>
                    <path d="M971 277h9v7h-9zM973 279l8 4M974 284l5-8" stroke="#d8484c" />
                    <rect x="983.500" y="279.500" width="23" height="13" fill="#c4c4ec" stroke="#4747a5" />
                    <text x="985" y="289" font-size="9" fill="#2d2da0">Stalp</text>

                    <!-- axis tripod -->
                    <path d="M296.500 610V584h-3l5-7 5 7h-3V610z" fill="url(#gy)" stroke="#1a8a1a" stroke-width=".500" />
                    <path d="M300 610.500H320v-3l12 5-12 5v-3H300z" fill="url(#gx)" stroke="#811" stroke-width=".500" />
                    <circle cx="298" cy="612.500" r="4.500" fill="#1414a8" />
                    <path d="M294 568l4 4.500 4-4.500M298 572.500V577" stroke="#2bc02b" stroke-width="1.300" />
                    <path d="M335 609l8 8M343 609l-8 8" stroke="#cc3340" stroke-width="1.300" />
                    <path d="M294.500 619.500h7l-7 8h8" stroke="#14147a" stroke-width="1.300" />
                    <circle cx="260" cy="651" r="5.500" stroke="#444" stroke-width="1.500" stroke-dasharray="2 2.300" />
                    <path d="M258 649h4v4h-4z" fill="#e07078" stroke="#b84a52" />
                </g>
            </svg>

            <span class="absolute top-px left-[488px] flex h-5 w-[33px] items-center justify-center border border-[#a9b2c8] bg-[#e2e6f0] font-['Liberation_Sans',sans-serif] text-[11px] text-[#6674a0]">Plan</span>
            <svg class="absolute top-[6px] right-1 h-[9px] w-[22px]" viewBox="0 0 22 9"><path d="M3 3V1h6v4H7M1 3h6v5H1z" fill="none" stroke="#777" stroke-width="1.200" /><path d="M14 1l6 7M20 1l-6 7" stroke="#888" stroke-width="2" /></svg>
        </main>

        <aside class="flex w-6 shrink-0 flex-col items-center border-l border-[#bbb]">
            <i class="mt-[3px] h-px w-5 bg-[#aaa]"></i>
            <div id="edit" class="mt-1 flex h-[290px] shrink-0 flex-col justify-between"></div>
            <i class="mt-[5px] h-px w-full bg-[#888]"></i>
            <i class="mt-[51px] h-px w-full bg-[#888]"></i>
            <i class="mt-[3px] h-px w-5 bg-[#aaa]"></i>
            <div id="filter1" class="mt-[2px] flex h-[90px] shrink-0 flex-col justify-between"></div>
            <i class="mt-[5px] h-px w-full bg-[#888]"></i>
            <div id="filter2" class="mt-[7px] flex h-[88px] shrink-0 flex-col justify-between"></div>
            <i class="mt-[4px] h-px w-full bg-[#888]"></i>
            <i class="mt-auto h-px w-full bg-[#888]"></i>
        </aside>
    </div>

    <!-- floating dialog -->
    <form class="absolute top-[73px] left-[254px] flex w-[354px] flex-col rounded-xs border border-[#444] bg-linear-to-r from-[#e2edf7] via-[#bfe0f7] to-[#dbe9f5] px-1 pb-[3px] shadow-[2px_3px_7px_2px_#0009]" onsubmit="return false">
        <div class="flex h-[17px] items-center pl-[2px] text-[#111]">
            Introducere armare suprafata
            <button type="button" aria-label="Inchide" class="ml-auto flex h-[13px] w-[14px] items-center justify-center rounded-xs border border-[#8b4a42] bg-linear-to-b from-[#e2a59a] to-[#c0503e]"><svg class="size-[6px]" viewBox="0 0 6 6"><path d="M0 0l6 6M6 0L0 6" stroke="#fff" stroke-width="2" /></svg></button>
        </div>
        <div class="border border-[#333] bg-[#f0f0f0] px-[2px] pt-[3px] pb-2">
            <div class="flex h-[37px]">
                <div class="flex w-[29px] flex-col gap-[2px]">
                    <button type="button" aria-label="Contur" class="flex h-[17px] w-[18px] items-center justify-center rounded-xs border border-[#777] bg-[#f5f5f5]"><i class="h-[5px] w-[7px] border border-[#555]"></i></button>
                    <button type="button" aria-label="Sterge contur" class="relative flex h-[17px] w-[18px] items-center justify-center rounded-xs border border-[#777] bg-[#f5f5f5]"><i class="h-[5px] w-[7px] border border-[#555]"></i><svg class="absolute top-0 right-0 size-2" viewBox="0 0 8 8"><path d="M1 0l6 7M7 0L1 6" stroke="#d22" stroke-width="1.500" /></svg></button>
                </div>
                <button type="button" aria-label="Acoperire" class="flex h-[17px] w-[18px] shrink-0 items-center justify-center rounded-xs border border-[#777] bg-[#f5f5f5]"><svg class="size-3" viewBox="0 0 12 12"><path d="M2 2v8h6M2 3h4v3h4v4" fill="none" stroke="#444" stroke-dasharray="2 1" /><path d="M2 1h2M5 1h2M9 5h2M9 10h2" stroke="#111" stroke-width="1.500" fill="none" /></svg></button>
                <input aria-label="Acoperire beton" value="-0.020" class="ml-px h-[18px] w-[58px] border border-[#ccc] bg-white text-center">
                <div class="ml-[12px] flex flex-col gap-px">
                    <div class="flex h-[18px] items-center gap-1">
                        <svg class="h-3 w-[14px]" viewBox="0 0 14 12"><path d="M0 .500h14M0 11.500h14" stroke="#777" /><path d="M4 7h6L7 10z" /></svg>
                        <input aria-label="Lungime" value="7.220" class="h-full w-[58px] border border-[#ccc] bg-white text-center">
                    </div>
                    <div class="flex h-[18px] items-center gap-1">
                        <svg class="h-3 w-[14px]" viewBox="0 0 14 12"><path d="M0 .500h14M0 11.500h14" stroke="#777" /><path d="M7 1v10" stroke="#b77" /></svg>
                        <input aria-label="Grosime" value="0.160" class="h-full w-[58px] border border-[#ccc] bg-white text-center">
                        <div class="-ml-1 flex gap-px pl-px" data-spin></div>
                    </div>
                </div>
                <div class="ml-[12px] flex flex-col gap-px">
                    <div class="flex h-[18px] items-center gap-1">
                        <svg class="h-3 w-[13px]" viewBox="0 0 13 12"><path d="M0 .500h13M0 3.500h13M0 11.500h13" stroke="#777" /><path d="M6.500 0v6M4 3.500h5" stroke="#c44" /></svg>
                        <input aria-label="Acoperire sus" value="---" class="h-full w-[58px] border border-[#ccc] bg-white text-center">
                        <div class="-ml-1 flex gap-px pl-px" data-spin></div>
                    </div>
                    <div class="flex h-[18px] items-center gap-1">
                        <svg class="h-3 w-[13px]" viewBox="0 0 13 12"><path d="M0 .500h13M0 8.500h13M0 11.500h13" stroke="#777" /><path d="M6.500 6v6M4 8.500h5" stroke="#c44" /></svg>
                        <input aria-label="Acoperire jos" value="0.020" class="h-full w-[58px] border border-[#ccc] bg-white text-center">
                        <div class="-ml-1 flex gap-px pl-px" data-spin></div>
                    </div>
                </div>
            </div>
            <div class="mt-[6px] flex justify-end gap-[11px] border-t border-[#bbb] pt-[6px] pr-1">
                <button class="h-[17px] w-[56px] rounded-xs border border-[#777] bg-linear-to-b from-[#f4f4f4] to-[#d2d2d2]">OK</button>
                <button type="button" class="h-[17px] w-[56px] rounded-xs border border-[#777] bg-linear-to-b from-[#f4f4f4] to-[#d2d2d2]">Abandon</button>
            </div>
        </div>
    </form>

    <div class="flex h-[26px] shrink-0 items-center border-b border-[#999] bg-[#eee] pl-1">
        <i class="h-[19px] w-px bg-[#aaa]"></i>
        <p class="ml-1 font-bold text-black">&lt;Introducere armare suprafata&gt; Confirmare domeniu repartitie</p>
        <i class="h-full w-px bg-[#999]"></i>
    </div>

    <footer class="flex h-4 shrink-0 items-center bg-[#fbfbfb] pl-px text-[#666]">
        <span class="flex-1">Apasati F1 pentru Ajutor.</span>
        <svg class="mr-[3px] h-[11px] w-[14px]" viewBox="0 0 14 11"><path d="M1 1v9h10M1 1l4 5 4-5 1 6M5 6l-4 2h9M11 4h2v6h-2z" fill="none" stroke="#333" /></svg>
        <span class="w-[77px]">Tip reprezentare:</span>
        <span class="w-[191px] text-black">Desene armare</span>
        <span class="w-[31px]">Scara:</span>
        <span class="w-[55px] text-black">1 : 50</span>
        <span class="w-[47px]">Lungime:</span>
        <span class="w-[39px]">m</span>
        <span class="w-[34px]">Unghi:</span>
        <span class="w-[39px] text-black">0.000</span>
        <span class="w-[37px]">deg</span>
        <span class="w-[18px] border-l border-[#bbb] pl-[2px]">%:</span>
        <span class="w-[28px]">1</span>
    </footer>

    <script>
        const byId = (id) => document.getElementById(id);
        const svg = (id, cls) => `<svg class="fill-none stroke-[#445] ${cls}"><use href="#${id}"></use></svg>`;

        byId('menu').innerHTML = ['Fisier', 'Editare', 'Vedere', 'Introducere', 'Format', 'Extras', 'Creare', 'Modificare', 'Continuare', 'Plug-In', 'Ferestre', '?']
            .map(t => `<a href="#">${t}</a>`).join('');

        document.querySelectorAll('[data-icons]').forEach(group => {
            group.innerHTML = group.dataset.icons.split(' ')
                .map(n => `<button aria-label="${n}" class="flex w-[19px] justify-center">${svg('i-' + n, 'size-[14px]')}</button>`).join('');
        });

        byId('tabs').innerHTML = ['Func...', 'Pro...', 'Asis...', 'Bibl...', 'Obi...', 'Co...', 'Layer'].map((t, i) => i === 0
            ? `<button class="h-[17px] w-[36px] bg-white">${t}</button>`
            : `<button class="h-[15px] flex-1 border border-b-0 border-[#999] bg-linear-to-b from-[#f2f2f2] to-[#dcdcdc]">${t}</button>`).join('');

        const tool = ([icon, label]) => `<li><button class="flex w-full flex-col items-center">${svg('i-' + icon, icon === 'suprafata' ? 'size-[18px] -my-[2px] rounded-xs border border-[#777] bg-white' : 'size-[14px]')}${label ? `<span class="mt-1 whitespace-pre">${label}</span>` : ''}</button></li>`;

        byId('creare').innerHTML = [
            ['preluare', 'Preluare de\nla element'], ['forme', 'Forme\nbare'], ['bare', 'Introducere\nbare'],
            ['text', 'Text'], ['repart1', 'Repartitie\nbare'], ['repart2', 'Repartitie'],
            ['cota', 'Linie\ncota, text'], ['armff', 'Elemente\narmate FF'], ['suprafata', 'Introducere\narmare su...'],
            ['circ', 'Armare\ncirculara'], ['definire', 'Definire\ngrupa'], ['montaj', 'Grupa\nmontaj'],
            ['schemat', 'Schema\ntotala'], ['schemap', 'Schema\npartiala'], ['mansoane', 'Introducer...\nmansoane...'],
            ['sfarsit', 'Marcare\nsfarsit bara'], ['nivel', 'Linii nivel\narmare'], ['culori', 'Armare\nF... - culori'],
            ['excel'], ['export'], ['export2']
        ].map(tool).join('');

        byId('modificare').innerHTML = [
            ['info', 'Informatii\nelement'], ['marca', 'Modificare\nmarca'], ['modrep', 'Modificare\nrepartitie'],
            ['modgrid', 'Modificar...\nrepartitie'], ['modgrid2', 'Modificar...\narmare su...'], ['modview', 'Modificar...\nrepartitie'],
            ['modreprez', 'Modificare\nreprezenta...'], ['mutrep', 'Mutare\nreprezenta...'], ['muttext', 'Mutare text\nfara colizi...'],
            ['factor', 'Modificare\nfactor buc...'], ['carlig', 'Modificare\ncarlig'], ['raza', 'Modificare\nraza indoire'],
            ['intro', 'Introducere'], ['sterge', 'Stergere'], ['articul', 'Articulare']
        ].map(tool).join('');

        byId('side').innerHTML = ['pen', 'line', 'wall', 'info', 'stack', 'photo', 'hat', 'blocks', 'chan', 'beam', 'spiral'].map((n, i) => i === 0
            ? `<button aria-label="${n}" class="flex h-[18px] w-[18px] items-center justify-center border-r border-b border-[#555]">${svg('s-' + n, 'size-[14px]')}</button>`
            : `<button aria-label="${n}" class="flex h-[18px] w-4 items-center justify-center rounded-r-xs border border-l-0 border-[#666] bg-[#f3f3f3]">${svg('s-' + n, 'size-[13px]')}</button>`).join('');

        const column = (id, prefix, names) => byId(id).innerHTML = names.split(' ')
            .map(n => `<button aria-label="${n}">${svg(prefix + n, 'size-[14px]')}</button>`).join('');
        column('edit', 'r-', 'erase cut seg trim poly mirror1 mirror2 copy move rot rot2 rot3 multi order scale del');
        column('filter1', 'f-', 'pick block line house tray');
        column('filter2', 'f-', 'arrow box sum funnel funnel2');

        const glyphs = [
            '<path d="M2 2h3v3M3 8v2" stroke="#229" stroke-width="1.500"/><path d="M3 6h2M3 10h2" stroke="#d60" stroke-width="2"/><path d="M4 12v2" stroke="#229" stroke-width="2"/>',
            '<path d="M4 14V3M2 5l2-2 2 2" stroke="#229"/>',
            '<path d="M4 2v11M2 11l2 2 2-2" stroke="#229"/>'
        ];
        document.querySelectorAll('[data-spin]').forEach(box => {
            box.innerHTML = glyphs.map((g, i) => `<button type="button" aria-label="pas ${i + 1}" class="flex h-[17px] w-[9px] items-center justify-center rounded-xs border border-[#889] bg-[#f5f5fa]"><svg class="h-[15px] w-[7px]" viewBox="0 0 8 16" fill="none">${g}</svg></button>`).join('');
        });

        // grid nodes and axis bubbles of both plans
        const node = (x, y, r) => `<rect x="${x - r}" y="${y - r}" width="${r * 2}" height="${r * 2}"/>`;
        const bubble = (x, y, t) => `<circle cx="${x}" cy="${y}" r="2.800"/><text x="${x}" y="${y + 1.500}" font-size="4" fill="#334" stroke="none" text-anchor="middle">${t}</text>`;
        const leftX = [488.5, 560.5, 644.5, 715.5], rightX = [901.5, 973.5, 1056.5, 1128.5];
        byId('nodesLeft').innerHTML = [220.5, 280.5, 340.5].flatMap(y => leftX.map(x => node(x, y, 3))).join('');
        byId('nodesRight').innerHTML = [223.5, 283.5, 343.5].flatMap(y => rightX.map(x => node(x, y, 2.5))).join('');
        byId('bubblesLeft').innerHTML = leftX.map((x, i) => bubble(x, 182.5, i + 1) + bubble(x, 450.5, i + 1)).join('')
            + [220.5, 280.5, 340.5, 411.5].map((y, i) => bubble(449, y, 'ABCD'[i]) + bubble(756, y, 'ABCD'[i])).join('');
        byId('bubblesRight').innerHTML = rightX.map((x, i) => bubble(x, 186, i + 1) + bubble(x, 451, i + 1)).join('')
            + [223.5, 283.5, 343.5].map((y, i) => bubble(1167, y, 'ABC'[i])).join('');
    </script>
</body>

</html>
